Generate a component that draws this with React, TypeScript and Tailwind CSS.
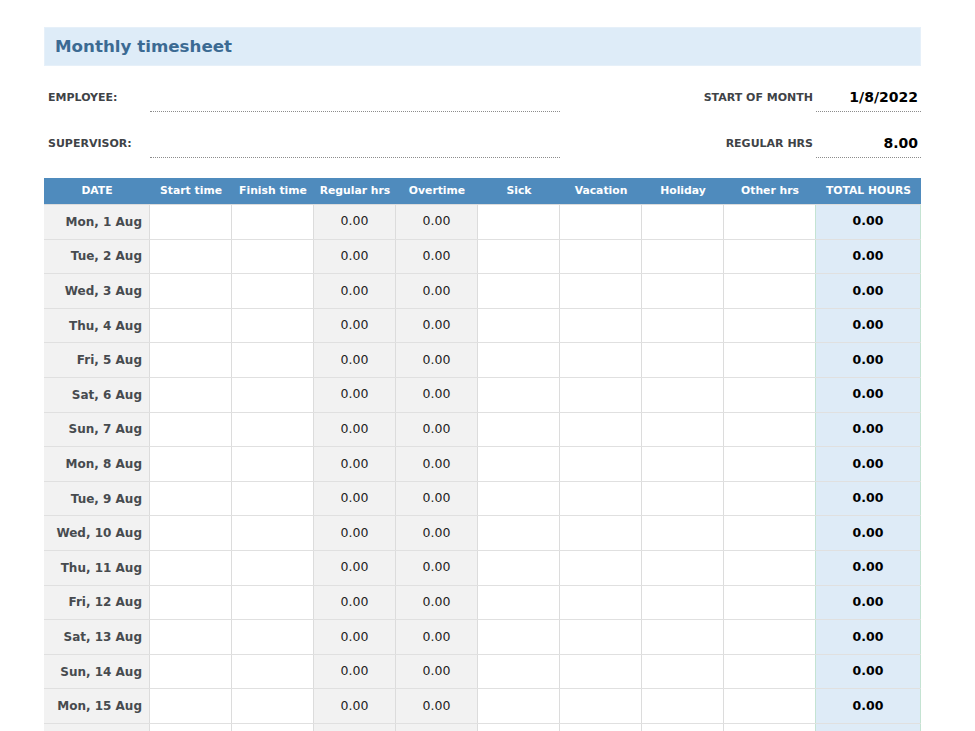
import React from 'react';

const days = ['Mon', 'Tue', 'Wed', 'Thu', 'Fri', 'Sat', 'Sun'];

const rows = Array.from({ length: 31 }, (_, i) => `${days[i % 7]}, ${i + 1} Aug`);

const headers = ['DATE', 'Start time', 'Finish time', 'Regular hrs', 'Overtime', 'Sick', 'Vacation', 'Holiday', 'Other hrs', 'TOTAL HOURS'];

const gridCols = 'grid grid-cols-[106px_82px_82px_82px_82px_82px_82px_82px_92px_105px]';

const App: React.FC = () => {
  return (
    <div className="h-[731px] overflow-hidden bg-white" style={{ fontFamily: '"DejaVu Sans", Verdana, sans-serif' }}>
      <div className="mx-[44px] w-[877px] pt-[27px]">
        {/* Title */}
        <div className="h-[39px] flex items-center bg-[#deecf8] border border-[#e6f0f9] pl-[10px]">
          <h1 className="text-[16.7px] font-bold text-[#3b6a93]">Monthly timesheet</h1>
        </div>

        {/* Info rows */}
        <div className="mt-[11px] flex items-end h-[35px]">
          <div className="w-[106px] pl-[4px] pb-[6px] text-[11px] leading-[16px] font-bold text-[#3f4347]">EMPLOYEE:</div>
          <div className="w-[410px] h-full border-b border-dotted border-[#8c8c8c]" />
          <div className="flex-1 pb-[6px] pr-[3px] text-right text-[11px] leading-[16px] font-bold text-[#3f4347]">START OF MONTH</div>
          <div className="w-[105px] pb-[6px] pr-[3px] text-right text-[14px] leading-[16px] font-bold text-black border-b border-dotted border-[#8c8c8c]">1/8/2022</div>
        </div>
        <div className="mt-[11px] flex items-end h-[35px]">
          <div className="w-[106px] pl-[4px] pb-[6px] text-[11px] leading-[16px] font-bold text-[#3f4347]">SUPERVISOR:</div>
          <div className="w-[410px] h-full border-b border-dotted border-[#8c8c8c]" />
          <div className="flex-1 pb-[6px] pr-[3px] text-right text-[11px] leading-[16px] font-bold text-[#3f4347]">REGULAR HRS</div>
          <div className="w-[105px] pb-[6px] pr-[3px] text-right text-[14px] leading-[16px] font-bold text-black border-b border-dotted border-[#8c8c8c]">8.00</div>
        </div>

        {/* Table */}
        <div className="mt-[20px]">
          <div className={`${gridCols} h-[27px] bg-[#4f8bbd] border-b border-[#dcdcdc]`}>
            {headers.map((h) => (
              <div key={h} className="flex items-center justify-center text-[10.8px] font-bold text-white whitespace-nowrap">
                {h}
              </div>
            ))}
          </div>
          {rows.map((d) => (
            <div key={d} className={`${gridCols} h-[34.6px] border-b border-[#e0e0e0]`}>
              <div className="flex items-center justify-end pr-[7px] bg-[#f2f2f2] border-r border-[#dcdcdc] text-[12px] font-bold text-[#474b4f]">{d}</div>
              <div className="border-r border-[#dcdcdc]" />
              <div className="border-r border-[#dcdcdc]" />
              <div className="flex items-center justify-center bg-[#f2f2f2] border-r border-[#dcdcdc] text-[12.5px] text-[#222]">0.00</div>
              <div className="flex items-center justify-center bg-[#f2f2f2] border-r border-[#dcdcdc] text-[12.5px] text-[#222]">0.00</div>
              <div className="border-r border-[#dcdcdc]" />
              <div className="border-r border-[#dcdcdc]" />
              <div className="border-r border-[#dcdcdc]" />
              <div className="border-r border-[#dcdcdc]" />
              <div className="flex items-center justify-center bg-[#deebf7] border-l border-r border-[#c4e3d2] -ml-px text-[12.5px] font-bold text-black">0.00</div>
            </div>
          ))}
        </div>
      </div>
    </div>
  );
};

export default App;
